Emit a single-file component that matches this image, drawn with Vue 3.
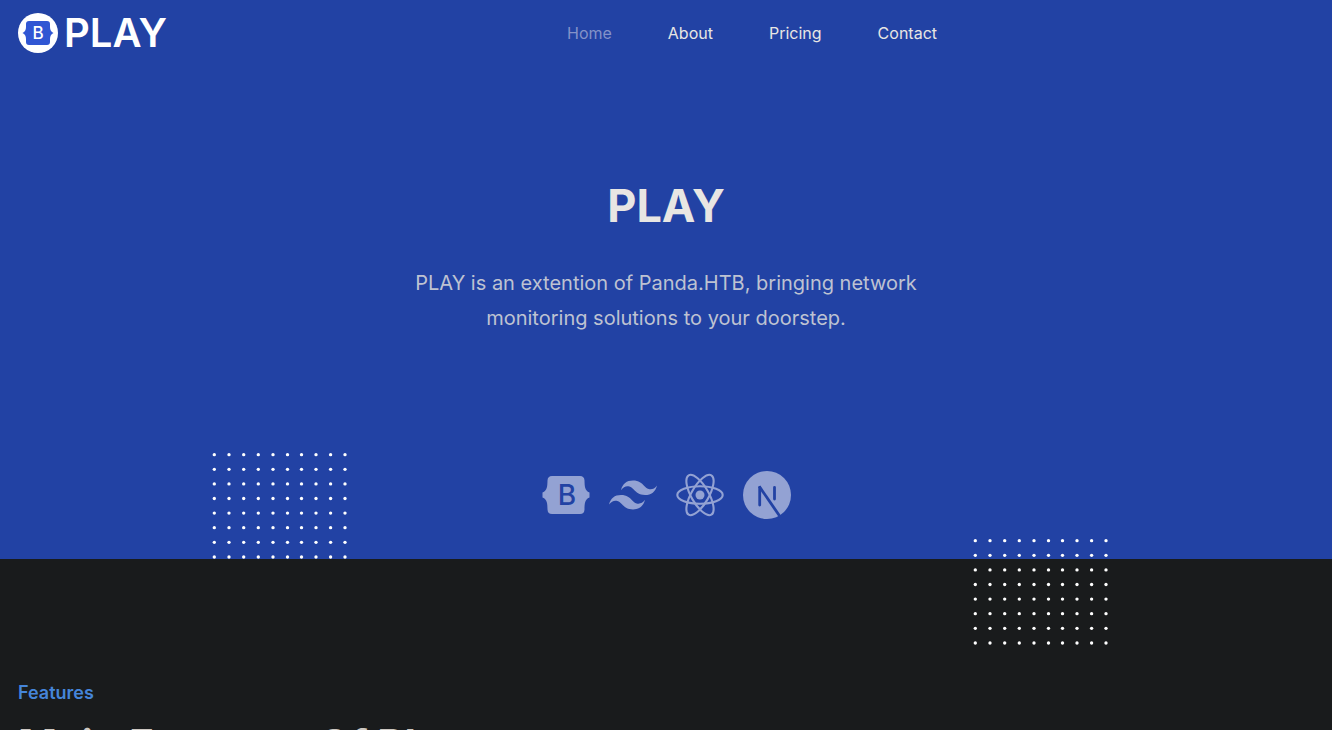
<script setup>
const links = ['Home', 'About', 'Pricing', 'Contact']
const columns = [2.3, 17, 31.7, 46.3, 61, 75.5, 89.5, 104, 118.6, 133]
const rows = [1.7, 16.3, 30.9, 45.5, 60.1, 74.7, 89.3, 104]
</script>

<template>
  <div class="page">
    <section class="hero">
      <header class="header">
        <a class="brand" href="#home" aria-label="PLAY home">
          <svg class="badge" viewBox="0 0 40 40" aria-hidden="true">
            <circle cx="20" cy="20" r="20" fill="#fff" />
            <path
              fill="#3056d3"
              d="M8 11Q8 8 11 8H29Q32 8 32 11V14Q32 18.5 35.500 20Q32 21.500 32 26V29Q32 32 29 32H11Q8 32 8 29V26Q8 21.500 4.500 20Q8 18.500 8 14Z"
            />
            <text class="badge-letter" x="20" y="26" text-anchor="middle">B</text>
          </svg>
          <span class="wordmark">PLAY</span>
        </a>
        <nav class="nav" aria-label="Main">
          <a
            v-for="link in links"
            :key="link"
            :href="'#' + link.toLowerCase()"
            :class="{ active: link === 'Home' }"
          >{{ link }}</a>
        </nav>
      </header>

      <div class="intro">
        <h1>PLAY</h1>
        <p>PLAY is an extention of Panda.HTB, bringing network monitoring solutions to your doorstep.</p>
      </div>

      <div class="tech">
        <a href="#bootstrap" aria-label="Bootstrap">
          <svg viewBox="0 0 48 48">
            <path
              fill="currentColor"
              d="M5.500 9.500Q5.700 5 10 5H38Q42.300 5 42.500 9.500C42.700 15 42.500 19.500 47.500 21.500V26.500C42.500 28.500 42.700 33 42.500 38.500Q42.300 43 38 43H10Q5.700 43 5.500 38.500C5.300 33 5.500 28.500 .5 26.500V21.500C5.500 19.500 5.300 15 5.500 9.500Z"
            />
            <text class="bootstrap-letter" x="25" y="34" text-anchor="middle">B</text>
          </svg>
        </a>
        <a href="#tailwind" aria-label="Tailwind CSS">
          <svg viewBox="0 0 24 24">
            <path
              fill="currentColor"
              d="M12 4.800c-3.200 0-5.200 1.600-6 4.800 1.200-1.600 2.600-2.200 4.200-1.800.913.228 1.565.89 2.288 1.624C13.666 10.618 15.027 12 18 12c3.200 0 5.200-1.600 6-4.800-1.200 1.600-2.600 2.200-4.200 1.800-.913-.228-1.565-.89-2.288-1.624C16.337 6.182 14.976 4.800 12 4.800zM6 12c-3.200 0-5.200 1.600-6 4.800 1.200-1.600 2.600-2.200 4.200-1.800.913.228 1.565.89 2.288 1.624C7.666 17.818 9.027 19.200 12 19.200c3.200 0 5.200-1.600 6-4.800-1.200 1.600-2.600 2.200-4.200 1.800-.913-.228-1.565-.89-2.288-1.624C10.337 13.382 8.976 12 6 12z"
            />
          </svg>
        </a>
        <a href="#react" aria-label="React">
          <svg viewBox="0 0 48 48">
            <g fill="none" stroke="currentColor" stroke-width="2.100">
              <ellipse cx="24" cy="24" rx="22.700" ry="8.700" />
              <ellipse cx="24" cy="24" rx="22.700" ry="8.700" transform="rotate(60 24 24)" />
              <ellipse cx="24" cy="24" rx="22.700" ry="8.700" transform="rotate(120 24 24)" />
            </g>
            <circle cx="24" cy="24" r="4.500" fill="currentColor" />
          </svg>
        </a>
        <a href="#next" aria-label="Next.js">
          <svg viewBox="0 0 48 48">
            <circle cx="24" cy="24" r="24" fill="currentColor" />
            <g fill="none" stroke="#2242a4">
              <path stroke-width="2.800" stroke-linecap="round" d="M16.700 16.500V34" />
              <path stroke-width="2.800" stroke-linecap="round" d="M31.500 16.500V28" />
              <path stroke-width="2.800" d="M16.200 15.300L37 45.500" />
            </g>
          </svg>
        </a>
      </div>

      <svg class="dots dots-left" viewBox="0 0 136 106" aria-hidden="true">
        <template v-for="y in rows" :key="y">
          <circle v-for="x in columns" :key="x" :cx="x" :cy="y" r="1.670" />
        </template>
      </svg>
      <svg class="dots dots-right" viewBox="0 0 136 106" aria-hidden="true">
        <template v-for="y in rows" :key="y">
          <circle v-for="x in columns" :key="x" :cx="x" :cy="y" r="1.670" />
        </template>
      </svg>
    </section>

    <section class="features">
      <span class="eyebrow">Features</span>
      <h2>Main Features Of Play</h2>
    </section>
  </div>
</template>

<style>
body {
  background: #191b1c;
}
</style>

<style scoped>
.page {
  height: 100vh;
  overflow: hidden;
  background: #191b1c;
  font-family: Inter, "Liberation Sans", sans-serif;
}

a {
  color: inherit;
  text-decoration: none;
}

.hero {
  position: relative;
  padding-bottom: 40px;
  background: #2242a4;
}

.header {
  display: grid;
  grid-template-columns: 1fr auto 1fr;
  align-items: center;
  height: 66px;
  padding: 0 18px;
}

.nav {
  display: flex;
  gap: 56px;
  margin-left: 172px;
  font-size: 16px;
  line-height: 24px;
  color: #e8e6e3;
}

.active {
  color: #8492c8;
}

.brand {
  display: flex;
  align-items: center;
  gap: 6px;
  color: #fff;
}

.badge {
  width: 40px;
  height: 40px;
}

.badge-letter {
  font-size: 17px;
  font-weight: 500;
  fill: #fff;
}

.wordmark {
  font-size: 40px;
  font-weight: 600;
  line-height: 40px;
}

.intro {
  width: 520px;
  max-width: 100%;
  margin: 0 auto;
  padding-top: 110px;
  text-align: center;
}

h1 {
  margin: 0;
  font-size: 45px;
  font-weight: 700;
  line-height: 60px;
  color: #e8e6e3;
}

p {
  margin: 30px 0 0;
  font-size: 20px;
  line-height: 35px;
  color: #bec2d2;
}

.tech {
  display: flex;
  justify-content: center;
  gap: 19px;
  margin-top: 135px;
  color: #93a2d3;
}

.tech svg {
  display: block;
  width: 48px;
  height: 48px;
}

.bootstrap-letter {
  font-size: 28px;
  font-weight: 500;
  fill: #2242a4;
}

.dots {
  position: absolute;
  width: 136px;
  height: 106px;
  fill: #fff;
}

.dots-left {
  left: 212px;
  bottom: 0;
}

.dots-right {
  right: 223px;
  bottom: -86px;
}

.features {
  padding: 120px 18px 0;
}

.eyebrow {
  display: block;
  font-size: 18px;
  font-weight: 600;
  line-height: 28px;
  color: #4585d9;
}

h2 {
  margin: 10px 0 0;
  font-size: 42px;
  font-weight: 700;
  line-height: 56px;
  color: #cdc8c2;
}
</style>
